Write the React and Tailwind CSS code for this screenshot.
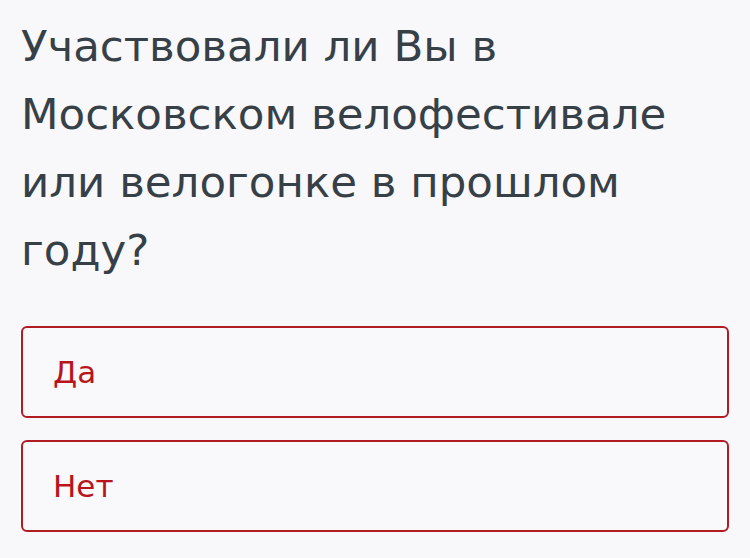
export default function App() {
  const options = ["Да", "Нет"];

  return (
    <div className="min-h-[558px] bg-[#f8f8fa] px-[21px] pt-[12px] font-['DejaVu_Sans',sans-serif]">
      <h1 className="text-[43.5px] leading-[68px] font-normal text-[#373f47]">
        Участвовали ли Вы в Московском велофестивале или велогонке в прошлом году?
      </h1>
      <div className="mt-[42px] flex flex-col gap-[22px]">
        {options.map((opt) => (
          <button
            key={opt}
            className="flex h-[92px] w-full items-center rounded-[6px] border-2 border-[#b01c22] bg-[#f9f9fb] px-[30px] text-left text-[31px] text-[#b8141b]"
          >
            {opt}
          </button>
        ))}
      </div>
    </div>
  );
}
